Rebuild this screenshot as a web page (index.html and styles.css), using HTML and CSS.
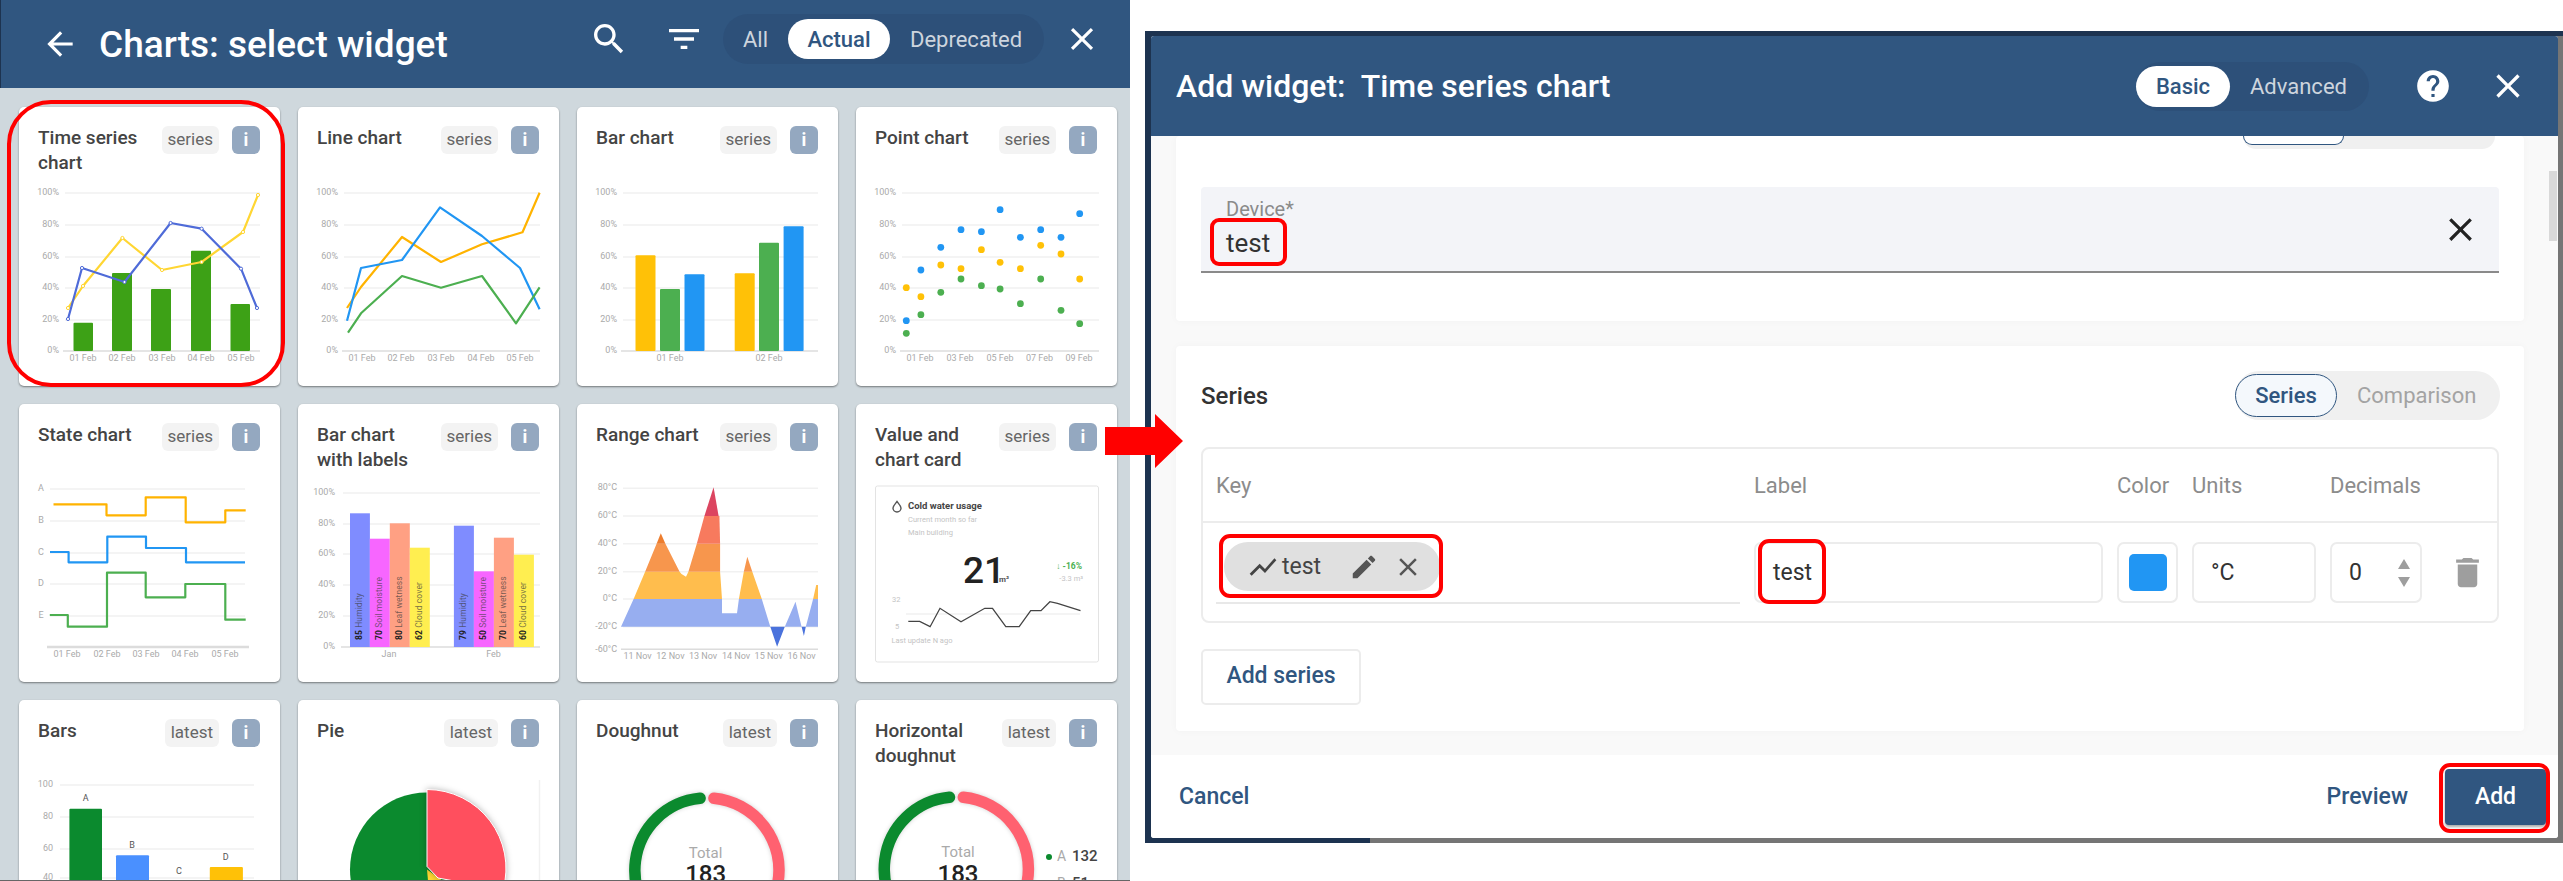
FILE: index.html
```html
<!DOCTYPE html>
<html lang="en">
<head>
<meta charset="utf-8">
<title>Charts: select widget</title>
<link rel="stylesheet" href="styles.css">
</head>
<body>
<div class="page">

<section class="picker">
  <header class="picker-head">
    <svg class="ic ic-back" viewBox="0 0 24 24"><path d="M20 11H7.83l5.59-5.59L12 4l-8 8 8 8 1.41-1.41L7.83 13H20v-2z"/></svg>
    <h1 class="picker-title">Charts: select widget</h1>
    <div class="picker-tools">
      <svg class="ic ic-40" viewBox="0 0 24 24"><path d="M15.5 14h-.79l-.28-.27C15.41 12.59 16 11.11 16 9.5 16 5.91 13.09 3 9.5 3S3 5.91 3 9.5 5.91 16 9.5 16c1.61 0 3.09-.59 4.23-1.57l.27.28v.79l5 4.99L20.49 19l-4.99-5zm-6 0C7.01 14 5 11.99 5 9.5S7.01 5 9.5 5 14 7.01 14 9.5 11.99 14 9.5 14z"/></svg>
      <svg class="ic ic-40 ic-filter" viewBox="0 0 24 24"><path d="M10 18h4v-2h-4v2zM3 6v2h18V6H3zm3 7h12v-2H6v2z"/></svg>
      <div class="seg seg-picker">
        <span class="seg-item seg-all">All</span>
        <span class="seg-item seg-on seg-actual">Actual</span>
        <span class="seg-item seg-dep">Deprecated</span>
      </div>
      <svg class="ic ic-38 ic-pclose" viewBox="0 0 24 24"><path d="M19 6.41L17.59 5 12 10.59 6.41 5 5 6.41 10.59 12 5 17.59 6.41 19 12 13.41 17.59 19 19 17.59 13.41 12 19 6.41z"/></svg>
    </div>
  </header>

  <div class="cards">

    <article class="card">
      <div class="card-head"><h2 class="card-title">Time series chart</h2><span class="tag">series</span><span class="info">i</span></div>
      <svg class="chart" viewBox="0 70 261 209">
        <path class="grid" d="M46 86H241M46 118H241M46 150H241M46 181H241M46 213H241"/><path class="axis" d="M44 244H241"/>
        <g class="yl" transform="translate(40 0)"><text y="86">100%</text><text y="118">80%</text><text y="150">60%</text><text y="181">40%</text><text y="213">20%</text><text y="244">0%</text></g>
        <g class="xl"><text x="64" y="252">01 Feb</text><text x="103" y="252">02 Feb</text><text x="143" y="252">03 Feb</text><text x="182" y="252">04 Feb</text><text x="222" y="252">05 Feb</text></g>
        <g fill="#3da116"><rect x="54.5" y="215.7" width="19.5" height="28.3" rx="1"/><rect x="93" y="166" width="20" height="78" rx="1"/><rect x="132" y="182" width="20" height="62" rx="1"/><rect x="172" y="143.7" width="20" height="100.3" rx="1"/><rect x="211.5" y="197" width="19.5" height="47" rx="1"/></g>
        <polyline class="ln" stroke="#ffd633" points="49,201 64,179 103.4,131 143,163 182.6,155 224,125 239,88"/>
        <polyline class="ln" stroke="#4f6bd8" points="49,212 63,161 105.5,175 151.6,116 182.6,121.7 222,161.7 238,201"/>
        <g fill="#fff" stroke="#ffd633"><circle cx="49" cy="201" r="1.6"/><circle cx="64" cy="179" r="1.6"/><circle cx="103.4" cy="131" r="1.6"/><circle cx="143" cy="163" r="1.6"/><circle cx="182.6" cy="155" r="1.6"/><circle cx="224" cy="125" r="1.6"/><circle cx="239" cy="88" r="1.6"/></g>
        <g fill="#fff" stroke="#4f6bd8"><circle cx="49" cy="212" r="1.6"/><circle cx="63" cy="161" r="1.6"/><circle cx="105.5" cy="175" r="1.6"/><circle cx="151.6" cy="116" r="1.6"/><circle cx="182.6" cy="121.7" r="1.6"/><circle cx="222" cy="161.7" r="1.6"/><circle cx="238" cy="201" r="1.6"/></g>
      </svg>
    </article>

    <article class="card">
      <div class="card-head"><h2 class="card-title">Line chart</h2><span class="tag">series</span><span class="info">i</span></div>
      <svg class="chart" viewBox="0 70 261 209">
        <path class="grid" d="M46 86H242M46 118H242M46 150H242M46 181H242M46 213H242"/><path class="axis" d="M44 244H242"/>
        <g class="yl" transform="translate(40 0)"><text y="86">100%</text><text y="118">80%</text><text y="150">60%</text><text y="181">40%</text><text y="213">20%</text><text y="244">0%</text></g>
        <g class="xl"><text x="64" y="252">01 Feb</text><text x="103" y="252">02 Feb</text><text x="143" y="252">03 Feb</text><text x="183" y="252">04 Feb</text><text x="222" y="252">05 Feb</text></g>
        <polyline class="ln" stroke="#ffb300" points="49,201 63,180 104,130 143,155 184,137.3 224.5,125.3 241.6,85.7"/>
        <polyline class="ln" stroke="#2196f3" points="49,213.7 63,161 104,153 142,100.3 184,129 222,161 241.6,202.3"/>
        <polyline class="ln" stroke="#4caf50" points="50,225.7 63,206.3 104,169 143,180.7 184,169 218,216.3 241.6,180.3"/>
      </svg>
    </article>

    <article class="card">
      <div class="card-head"><h2 class="card-title">Bar chart</h2><span class="tag">series</span><span class="info">i</span></div>
      <svg class="chart" viewBox="0 70 261 209">
        <path class="grid" d="M46 86H241M46 118H241M46 150H241M46 181H241M46 213H241"/><path class="axis" d="M44 244H241"/>
        <g class="yl" transform="translate(40 0)"><text y="86">100%</text><text y="118">80%</text><text y="150">60%</text><text y="181">40%</text><text y="213">20%</text><text y="244">0%</text></g>
        <g class="xl"><text x="93" y="252">01 Feb</text><text x="192" y="252">02 Feb</text></g>
        <g fill="#ffc107"><rect x="58.5" y="148.3" width="20" height="95.7" rx="1"/><rect x="157.7" y="166.3" width="20" height="77.7" rx="1"/></g>
        <g fill="#4caf50"><rect x="83" y="182" width="20" height="62" rx="1"/><rect x="182" y="135.7" width="20" height="108.3" rx="1"/></g>
        <g fill="#2196f3"><rect x="107.5" y="167.3" width="20" height="76.7" rx="1"/><rect x="206.6" y="119.3" width="20" height="124.7" rx="1"/></g>
      </svg>
    </article>

    <article class="card">
      <div class="card-head"><h2 class="card-title">Point chart</h2><span class="tag">series</span><span class="info">i</span></div>
      <svg class="chart" viewBox="0 70 261 209">
        <path class="grid" d="M46 86H243M46 118H243M46 150H243M46 181H243M46 213H243"/><path class="axis" d="M44 244H243"/>
        <g class="yl" transform="translate(40 0)"><text y="86">100%</text><text y="118">80%</text><text y="150">60%</text><text y="181">40%</text><text y="213">20%</text><text y="244">0%</text></g>
        <g class="xl"><text x="64" y="252">01 Feb</text><text x="104" y="252">03 Feb</text><text x="144" y="252">05 Feb</text><text x="183.5" y="252">07 Feb</text><text x="223" y="252">09 Feb</text></g>
        <g fill="#2196f3"><circle cx="50.3" cy="213.7" r="3.4"/><circle cx="64.9" cy="163" r="3.4"/><circle cx="84.8" cy="140.3" r="3.4"/><circle cx="105" cy="122.7" r="3.4"/><circle cx="125.4" cy="124.7" r="3.4"/><circle cx="144.1" cy="102.7" r="3.4"/><circle cx="164.4" cy="130.3" r="3.4"/><circle cx="184.7" cy="122.7" r="3.4"/><circle cx="205" cy="130.3" r="3.4"/><circle cx="223.7" cy="106.7" r="3.4"/></g>
        <g fill="#ffc107"><circle cx="50.3" cy="180.7" r="3.4"/><circle cx="64.9" cy="189.7" r="3.4"/><circle cx="84.8" cy="158" r="3.4"/><circle cx="105" cy="161.7" r="3.4"/><circle cx="125.4" cy="142.7" r="3.4"/><circle cx="144.1" cy="155.3" r="3.4"/><circle cx="164.4" cy="161.7" r="3.4"/><circle cx="184.7" cy="138.3" r="3.4"/><circle cx="205" cy="147" r="3.4"/><circle cx="223.7" cy="172" r="3.4"/></g>
        <g fill="#4caf50"><circle cx="50.3" cy="226.3" r="3.4"/><circle cx="64.9" cy="207.7" r="3.4"/><circle cx="84.8" cy="185.3" r="3.4"/><circle cx="105" cy="172" r="3.4"/><circle cx="125.4" cy="178.7" r="3.4"/><circle cx="144.1" cy="182" r="3.4"/><circle cx="164.4" cy="196.7" r="3.4"/><circle cx="184.7" cy="172" r="3.4"/><circle cx="205" cy="203.3" r="3.4"/><circle cx="223.7" cy="216.7" r="3.4"/></g>
      </svg>
    </article>

    <article class="card">
      <div class="card-head"><h2 class="card-title">State chart</h2><span class="tag">series</span><span class="info">i</span></div>
      <svg class="chart" viewBox="0 70 261 209">
        <path class="grid" d="M31 85H226M31 117H226M31 149H226M31 180H226M31 212H226"/><path class="axis axis-thick" d="M28 243H230"/>
        <g class="xl"><text x="22" y="85">A</text><text x="22" y="117">B</text><text x="22" y="149">C</text><text x="22" y="180">D</text><text x="22" y="212">E</text></g>
        <g class="xl"><text x="48" y="251">01 Feb</text><text x="88" y="251">02 Feb</text><text x="127" y="251">03 Feb</text><text x="166" y="251">04 Feb</text><text x="206" y="251">05 Feb</text></g>
        <polyline class="ln" stroke="#ffb300" points="34.5,100.3 87.5,100.3 87.5,111.3 126.7,111.3 126.7,93.3 166.7,93.3 166.7,118.3 206.3,118.3 206.3,106.3 226.7,106.3"/>
        <polyline class="ln" stroke="#2196f3" points="31,148 49.6,148 49.6,158.3 88.3,158.3 88.3,132.7 127,132.7 127,144 167,144 167,158.3 226,158.3"/>
        <polyline class="ln" stroke="#4caf50" points="30.8,211 48.8,211 48.8,222.7 88,222.7 88,168.7 126.7,168.7 126.7,193.3 166.3,193.3 166.3,180 206.3,180 206.3,215.7 226.7,215.7"/>
      </svg>
    </article>

    <article class="card">
      <div class="card-head"><h2 class="card-title">Bar chart<br>with labels</h2><span class="tag">series</span><span class="info">i</span></div>
      <svg class="chart" viewBox="0 70 261 209">
        <path class="grid" d="M45 89H242M45 120H242M45 150H242M45 181H242M45 212H242"/><path class="axis" d="M43 243H242"/>
        <g class="yl" transform="translate(37 0)"><text y="89">100%</text><text y="120">80%</text><text y="150">60%</text><text y="181">40%</text><text y="212">20%</text><text y="243">0%</text></g>
        <g class="xl"><text x="91" y="251">Jan</text><text x="195.5" y="251">Feb</text></g>
        <g fill="#7f8cff"><rect x="52" y="109.3" width="19.9" height="133.7"/><rect x="155.9" y="121.7" width="20" height="121.3"/></g>
        <g fill="#f766ff"><rect x="71.8" y="134.7" width="20" height="108.3"/><rect x="175.9" y="167.3" width="20" height="75.7"/></g>
        <g fill="#ffa083"><rect x="91.8" y="119.3" width="20" height="123.7"/><rect x="195.9" y="133.7" width="20" height="109.3"/></g>
        <g fill="#ffee50"><rect x="111.8" y="143.7" width="20" height="99.3"/><rect x="215.9" y="150.7" width="20" height="92.3"/></g>
        <g class="bl">
          <text transform="translate(62 236) rotate(-90)"><tspan class="bl-n">85</tspan> Humidity</text>
          <text transform="translate(82 236) rotate(-90)"><tspan class="bl-n">70</tspan> Soil moisture</text>
          <text transform="translate(102 236) rotate(-90)"><tspan class="bl-n">80</tspan> Leaf wetness</text>
          <text transform="translate(122 236) rotate(-90)"><tspan class="bl-n">62</tspan> Cloud cover</text>
          <text transform="translate(166 236) rotate(-90)"><tspan class="bl-n">79</tspan> Humidity</text>
          <text transform="translate(186 236) rotate(-90)"><tspan class="bl-n">50</tspan> Soil moisture</text>
          <text transform="translate(206 236) rotate(-90)"><tspan class="bl-n">70</tspan> Leaf wetness</text>
          <text transform="translate(226 236) rotate(-90)"><tspan class="bl-n">60</tspan> Cloud cover</text>
        </g>
      </svg>
    </article>

    <article class="card">
      <div class="card-head"><h2 class="card-title">Range chart</h2><span class="tag">series</span><span class="info">i</span></div>
      <svg class="chart" viewBox="0 70 261 209">
        <path class="grid" d="M46 84.3H241M46 112H241M46 139.7H241M46 167.7H241M46 195H241M46 222.7H241"/><path class="axis" d="M44 245.3H241"/>
        <g class="yl" transform="translate(40 0)"><text y="84">80°C</text><text y="112">60°C</text><text y="140">40°C</text><text y="168">20°C</text><text y="195">0°C</text><text y="223">-20°C</text><text y="246">-60°C</text></g>
        <g class="xl"><text x="60.5" y="253">11 Nov</text><text x="93.4" y="253">12 Nov</text><text x="126" y="253">13 Nov</text><text x="159" y="253">14 Nov</text><text x="191.7" y="253">15 Nov</text><text x="224.6" y="253">16 Nov</text></g>
        <polygon fill="#97aef0" points="44,222.7 56.6,195 145,195 145,209.3 160,209.3 161.9,195 184.8,195 193.3,222.7 207.8,222.7 218.5,197.7 224.6,222.7 228.8,222.7 236.1,195 241,195 241,222.7"/>
        <path fill="#4a72dc" d="M193.3 222.7L200.1 242.7L207.8 222.7ZM224.6 222.7L226.9 232L228.8 222.7Z"/>
        <path fill="#ffbd4d" d="M56.6 195L68.1 167.7H102.6L104.5 170L109 172.7L111.4 167.7H143.1L145 195ZM161.9 195L166.8 167.7H175.3L184.8 195ZM236.1 195L239.2 181H241V195Z"/>
        <path fill="#f7964d" d="M68.1 167.7L79.6 139.7H88.4L102.6 167.7ZM111.4 167.7L119.8 139.7H143.1V167.7ZM166.8 167.7L170.3 152.7L175.3 167.7Z"/>
        <path fill="#ed7d2e" d="M79.6 139.7L83.8 129.3L88.4 139.7Z"/>
        <path fill="#f77a5e" d="M119.8 139.7L127.4 112H142.4L143.1 139.7Z"/>
        <path fill="#dc4560" d="M127.4 112L136.6 83.3L141.6 112Z"/>
      </svg>
    </article>

    <article class="card">
      <div class="card-head"><h2 class="card-title">Value and<br>chart card</h2><span class="tag">series</span><span class="info">i</span></div>
      <svg class="chart" viewBox="0 70 261 209">
        <rect x="19.5" y="82" width="223" height="176" rx="2" fill="#fff" stroke="#e3e3e3"/>
        <path d="M41 97.5c2 2.6 4 4.5 4 6.5a4 4 0 0 1-8 0c0-2 2-3.9 4-6.5z" fill="none" stroke="#555" stroke-width="1.4"/>
        <text class="v-name" x="52" y="102">Cold water usage</text>
        <text class="v-sub" x="52" y="116">Current month so far</text>
        <text class="v-sub" x="52" y="129">Main building</text>
        <text class="v-num" x="107" y="169">21</text>
        <text class="v-unit" x="143" y="176">m³</text>
        <text class="v-delta" x="226" y="163">↓ -16%</text>
        <text class="v-sub v-end" x="227" y="175">-3.3 m³</text>
        <path class="grid" d="M50 210H224"/>
        <text class="v-sub" x="36" y="196">32</text><text class="v-sub" x="39" y="223">5</text>
        <polyline class="ln-thin" points="52.3,217.3 63.7,217.3 74.1,222.7 84,204.3 105,217.7 128.8,204.3 136.5,204.3 149.8,222.7 163.2,222.7 174.7,206.7 185,206.7 193.9,197.7 201.5,199.3 224.5,206.7"/>
        <text class="v-sub" x="35.4" y="237">Last update N ago</text>
      </svg>
    </article>

    <article class="card">
      <div class="card-head"><h2 class="card-title">Bars</h2><span class="tag">latest</span><span class="info">i</span></div>
      <svg class="chart" viewBox="0 70 261 209">
        <path class="grid" d="M41 85H235M41 117H235M41 149H235M41 178H235"/>
        <g class="yl" transform="translate(34 0)"><text y="85">100</text><text y="117">80</text><text y="149">60</text><text y="178">40</text></g>
        <g class="xl xl-dark"><text x="66.7" y="99">A</text><text x="113" y="146">B</text><text x="160" y="172">C</text><text x="206.7" y="158">D</text></g>
        <rect x="50.4" y="108.7" width="32.6" height="100" rx="1" fill="#0b8a2e"/>
        <rect x="97" y="155.3" width="33" height="60" rx="1" fill="#4a90ff"/>
        <rect x="190.8" y="167" width="33.1" height="60" rx="1" fill="#ffc107"/>
      </svg>
    </article>

    <article class="card">
      <div class="card-head"><h2 class="card-title">Pie</h2><span class="tag">latest</span><span class="info">i</span></div>
      <svg class="chart" viewBox="0 70 261 209">
        <path class="grid" d="M241.5 80V200"/>
        <circle cx="129" cy="169.5" r="77" fill="#0b8a2e"/>
        <path d="M129 169.5L143 179.5L137 260Z" fill="#ffd633"/>
        <path class="pie-red" d="M129 166.5V89.5A79 79 0 0 1 205 190L140 178Z" fill="#ff4f5e" stroke="#fff"/>
      </svg>
    </article>

    <article class="card">
      <div class="card-head"><h2 class="card-title">Doughnut</h2><span class="tag">latest</span><span class="info">i</span></div>
      <svg class="chart" viewBox="0 70 261 209">
        <path class="ring" stroke="#0b8a2e" d="M123.1 98.3A72 72 0 0 0 105.4 237.7"/>
        <path class="ring" stroke="#ff6170" d="M136.9 98.3A72 72 0 0 1 200.9 182.5"/>
        <text class="d-total" x="128.6" y="154">Total</text>
        <text class="d-num" x="128.6" y="176">183</text>
      </svg>
    </article>

    <article class="card">
      <div class="card-head"><h2 class="card-title">Horizontal<br>doughnut</h2><span class="tag">latest</span><span class="info">i</span></div>
      <svg class="chart" viewBox="0 70 261 209">
        <path class="ring" stroke="#0b8a2e" d="M93.5 97.3A72 72 0 0 0 75.8 236.7"/>
        <path class="ring" stroke="#ff6170" d="M107.3 97.3A72 72 0 0 1 171.3 181.5"/>
        <text class="d-total" x="102" y="153">Total</text>
        <text class="d-num" x="102" y="176">183</text>
        <circle cx="193" cy="157" r="3" fill="#0b8a2e"/><text class="d-key" x="201" y="157">A</text><text class="d-val" x="216" y="157">132</text>
        <circle cx="193" cy="184" r="3" fill="#ff6170"/><text class="d-key" x="201" y="184">B</text><text class="d-val" x="216" y="184">51</text>
      </svg>
    </article>
  </div>
</section>

<section class="frame">
  <div class="dialog">
    <header class="dlg-head">
      <h1 class="dlg-title">Add widget:&nbsp; Time series chart</h1>
      <div class="seg seg-dlg">
        <span class="seg-item seg-on seg-basic">Basic</span>
        <span class="seg-item seg-adv">Advanced</span>
      </div>
      <svg class="ic ic-help" viewBox="0 0 24 24"><path d="M12 2C6.48 2 2 6.48 2 12s4.48 10 10 10 10-4.48 10-10S17.52 2 12 2zm1 17h-2v-2h2v2zm2.07-7.75l-.9.92C13.45 12.9 13 13.5 13 15h-2v-.5c0-1.1.45-2.1 1.17-2.83l1.24-1.26c.37-.36.59-.86.59-1.41 0-1.1-.9-2-2-2s-2 .9-2 2H8c0-2.21 1.79-4 4-4s4 1.79 4 4c0 .88-.36 1.68-.93 2.25z"/></svg>
      <svg class="ic ic-dclose" viewBox="0 0 24 24"><path d="M19 6.41L17.59 5 12 10.59 6.41 5 5 6.41 10.59 12 5 17.59 6.41 19 12 13.41 17.59 19 19 17.59 13.41 12 19 6.41z"/></svg>
    </header>

    <div class="dlg-body">
      <div class="panel panel-device">
        <div class="clip-seg"><span class="clip-on"></span></div>
        <div class="field">
          <div class="field-main">
            <span class="field-label">Device*</span>
            <span class="field-value">test</span>
          </div>
          <svg class="ic ic-fclose" viewBox="0 0 24 24"><path d="M19 6.41L17.59 5 12 10.59 6.41 5 5 6.41 10.59 12 5 17.59 6.41 19 12 13.41 17.59 19 19 17.59 13.41 12 19 6.41z"/></svg>
        </div>
      </div>

      <div class="panel panel-series">
        <div class="series-head">
          <h2 class="series-title">Series</h2>
          <div class="seg seg-series">
            <span class="seg-item seg-series-on">Series</span>
            <span class="seg-item seg-comp">Comparison</span>
          </div>
        </div>
        <div class="table">
          <div class="t-row t-head">
            <span>Key</span><span>Label</span><span>Color</span><span>Units</span><span>Decimals</span><span></span>
          </div>
          <div class="t-row t-body">
            <div class="key-field">
              <div class="chip">
                <svg class="ic ic-trend" viewBox="0 0 24 24"><path d="M3.5 18.49l6-6.01 4 4L22 6.92l-1.41-1.41-7.09 7.97-4-4L2 16.99z"/></svg>
                <span class="chip-text">test</span>
                <svg class="ic ic-edit" viewBox="0 0 24 24"><path d="M3 17.25V21h3.75L17.81 9.94l-3.75-3.75L3 17.25zM20.71 7.04c.39-.39.39-1.02 0-1.41l-2.34-2.34c-.39-.39-1.02-.39-1.41 0l-1.83 1.83 3.75 3.75 1.83-1.83z"/></svg>
                <svg class="ic ic-cclose" viewBox="0 0 24 24"><path d="M19 6.41L17.59 5 12 10.59 6.41 5 5 6.41 10.59 12 5 17.59 6.41 19 12 13.41 17.59 19 19 17.59 13.41 12 19 6.41z"/></svg>
              </div>
            </div>
            <div class="box box-text">test</div>
            <div class="box box-color"><span class="swatch"></span></div>
            <div class="box box-text">°C</div>
            <div class="box box-text box-num">0
              <svg class="spin" viewBox="0 0 14 28"><path d="M7 0L13 10H1ZM7 28L1 18H13Z"/></svg>
            </div>
            <svg class="ic ic-trash" viewBox="0 0 24 24"><path d="M6 19c0 1.1.9 2 2 2h8c1.1 0 2-.9 2-2V7H6v12zM19 4h-3.5l-1-1h-5l-1 1H5v2h14V4z"/></svg>
          </div>
        </div>
        <button class="btn-outline">Add series</button>
      </div>
      <div class="scroll-thumb"></div>
    </div>

    <footer class="dlg-foot">
      <span class="link link-cancel">Cancel</span>
      <span class="link link-preview">Preview</span>
      <button class="btn-primary">Add</button>
    </footer>
  </div>
</section>

<div class="mark mark-card"></div>
<div class="mark mark-device"></div>
<div class="mark mark-chip"></div>
<div class="mark mark-label"></div>
<div class="mark mark-add"></div>
<svg class="flow-arrow" viewBox="0 0 78 54"><polygon points="0,13 50,13 50,0 78,27 50,54 50,41 0,41"/></svg>

</div>
</body>
</html>
```
FILE: styles.css
```css
* { box-sizing: border-box; }
html, body { margin: 0; padding: 0; background: #fff; }
body { font-family: Roboto, "Liberation Sans", sans-serif; overflow: hidden; }
h1, h2 { margin: 0; font-weight: 500; }
.page { position: relative; width: 2563px; height: 881px; display: flex; align-items: flex-start; overflow: hidden; }
.ic { display: block; flex: none; fill: currentColor; }

/* left: widget picker */
.picker { width: 1130px; height: 881px; flex: none; background: #cfd8dd; border-bottom: 1px solid #666; overflow: hidden; }
.picker-head { height: 88px; background: #305680; color: #fff; display: flex; align-items: center; padding-left: 40px; border-left: 1px solid #1d3350; }
.ic-back { width: 38px; height: 38px; margin-right: 20px; }
.picker-title { font-size: 37px; font-weight: 500; color: #fff; }
.picker-tools { margin-left: auto; display: flex; align-items: center; padding-bottom: 10px; height: 88px; }
.ic-40 { width: 40px; height: 40px; }
.ic-filter { margin-left: 35px; margin-right: 19px; }
.ic-38 { width: 38px; height: 38px; }
.ic-pclose { margin-left: 19px; margin-right: 29px; }

.seg { display: flex; align-items: center; border-radius: 30px; }
.seg-item { font-size: 22px; white-space: nowrap; }
.seg-picker { width: 321px; height: 50px; background: #2d5079; }
.seg-all { color: #cdd5de; margin-left: 20px; width: 45px; }
.seg-on { background: #fff; color: #305680; font-weight: 500; border-radius: 22px; display: flex; align-items: center; justify-content: center; }
.seg-actual { width: 102px; height: 40px; }
.seg-dep { color: #cdd5de; margin-left: 20px; }

.cards { display: grid; grid-template-columns: repeat(4, 261px); grid-auto-rows: 278.5px; gap: 18px; padding: 19px 0 0 19px; }
.card { background: #fff; border-radius: 5px; box-shadow: 0 1px 2px rgba(0,0,0,.45); overflow: hidden; }
.card-head { height: 70px; display: flex; align-items: flex-start; padding: 19px 20px 0 19px; }
.card-title { flex: 1; font-size: 19px; line-height: 25px; color: #444; font-weight: 500; margin-top: -1px; }
.tag { height: 28px; padding: 0 6px; background: #f3f3f3; border-radius: 6px; color: #666; font-size: 17px; line-height: 27px; }
.info { width: 28px; height: 28px; margin-left: 13px; background: #94a8c0; border-radius: 6px; color: #fff; font-size: 18px; font-weight: 700; text-align: center; line-height: 27px; }
.chart { display: block; width: 261px; height: 209px; font-family: Roboto, sans-serif; overflow: hidden; }
.chart text { dominant-baseline: middle; }
.grid { stroke: #f1f1f1; stroke-width: 1.5; fill: none; }
.axis { stroke: #dcdcdc; stroke-width: 1.5; fill: none; }
.axis-thick { stroke-width: 2.5; }
.yl text { font-size: 9px; fill: #aaa; text-anchor: end; }
.xl text { font-size: 9px; fill: #aaa; text-anchor: middle; }
.xl-dark text { fill: #555; }
.ln { fill: none; stroke-width: 2.2; stroke-linejoin: round; }
.ln-thin { fill: none; stroke: #444; stroke-width: 1.3; }
.bl text { font-size: 8.5px; fill: rgba(60,60,60,.7); letter-spacing: .1px; }
.bl-n { font-weight: 700; fill: #222; }
.v-name { font-size: 9.5px; font-weight: 700; fill: #444; }
.v-sub { font-size: 7.5px; fill: #c4c4c4; }
.v-end { text-anchor: end; }
.v-num { font-size: 37px; font-weight: 500; fill: #222; }
.v-unit { font-size: 8px; font-weight: 700; fill: #555; }
.v-delta { font-size: 8.5px; font-weight: 700; fill: #4caf50; text-anchor: end; }
.ring { fill: none; stroke-width: 11.5; stroke-linecap: round; filter: drop-shadow(0 0 2px rgba(0,0,0,.18)); }
.pie-red { stroke-width: 1; filter: drop-shadow(0 0 3px rgba(0,0,0,.3)); }
.d-total { font-size: 15px; fill: #aaa; text-anchor: middle; }
.d-num { font-size: 24px; font-weight: 500; fill: #222; text-anchor: middle; }
.d-key { font-size: 14px; fill: #aaa; }
.d-val { font-size: 15px; font-weight: 500; fill: #444; }

/* right: add-widget dialog */
.frame {
  margin-left: 15px; margin-top: 31px; width: 1418px; height: 812px; flex: none; padding: 5px 5px 5px 6px;
  background:
    linear-gradient(#1d3350, #1d3350) left top / 225px 100% no-repeat,
    linear-gradient(#1d3350, #1d3350) left top / 100% 5px no-repeat,
    #757575;
}
.dialog { height: 802px; background: #fff; border-radius: 3px; display: flex; flex-direction: column; overflow: hidden; }
.dlg-head { height: 100px; flex: none; background: #305680; color: #fff; display: flex; align-items: center; padding-left: 25px; }
.dlg-title { font-size: 32px; font-weight: 500; color: #fff; margin-right: auto; }
.seg-dlg { width: 233px; height: 49px; background: #2d5079; }
.seg-basic { width: 94px; height: 41px; }
.seg-adv { color: #cdd5de; margin-left: 20px; }
.ic-help { width: 38px; height: 38px; margin-left: 45px; }
.ic-dclose { width: 40px; height: 40px; margin-left: 36px; margin-right: 30px; }

.dlg-body { position: relative; height: 619px; flex: none; background: #f9f9f9; padding: 0 34px 0 25px; overflow: hidden; }
.panel { background: #fff; border-radius: 4px; padding: 0 25px; box-shadow: 0 0 8px rgba(0,0,0,.03); }
.panel-device { height: 185px; margin-bottom: 25px; }
.clip-seg { width: 252px; height: 13px; margin-left: auto; margin-bottom: 38px; margin-right: 4px; background: #f0f0f0; border-radius: 0 0 22px 22px; }
.clip-on { display: block; width: 101px; height: 9px; background: #fff; border: 1px solid #305680; border-top: 0; border-radius: 0 0 20px 20px; }
.field { height: 86px; background: #f3f4f8; border-bottom: 2px solid #8a8a8a; border-radius: 4px 4px 0 0; display: flex; align-items: center; padding: 0 19px 0 25px; justify-content: space-between; }
.field-main { display: flex; flex-direction: column; }
.field-label { font-size: 20px; line-height: 24px; color: #8a8a8a; margin-top: -3px; }
.field-value { font-size: 26px; line-height: 30px; color: #333; margin-top: 7px; }
.ic-fclose { width: 39px; height: 39px; color: #222; }

.panel-series { height: 385px; padding-top: 25px; }
.series-head { height: 49px; display: flex; align-items: center; justify-content: space-between; }
.series-title { font-size: 24px; font-weight: 500; color: #333; }
.seg-series { width: 265px; height: 49px; background: #f0f0f0; margin-right: -1px; }
.seg-series-on { width: 102px; height: 43px; background: #f4f8fc; border: 1px solid #305680; border-radius: 22px; color: #305680; font-weight: 500; display: flex; align-items: center; justify-content: center; }
.seg-comp { color: #a3a3a3; margin-left: 20px; }

.table { margin-top: 27px; height: 176px; border: 2px solid #ececec; border-radius: 8px; }
.t-row { display: grid; grid-template-columns: 524px 349px 61px 124px 92px 1fr; column-gap: 14px; padding-left: 13px; }
.t-head { height: 74px; align-items: center; border-bottom: 2px solid #ececec; font-size: 22px; color: #8c8c8c; }
.t-body { padding-top: 19px; align-items: flex-start; }
.key-field { height: 62px; border-bottom: 2px solid #e8e8e8; padding-left: 8px; }
.chip { width: 216px; height: 49px; background: #e0e0e0; border-radius: 24px; display: flex; align-items: center; color: #444; padding-left: 24px; }
.ic-trend { width: 32px; height: 32px; color: #444; margin-left: -1px; }
.chip-text { font-size: 23px; margin-left: 3px; width: 67px; }
.ic-edit { width: 30px; height: 30px; color: #555; }
.ic-cclose { width: 30px; height: 30px; color: #555; margin-left: 14px; }
.box { height: 61px; border: 2px solid #ececec; border-radius: 7px; display: flex; align-items: center; font-size: 23px; color: #333; }
.box-text { padding-left: 17px; }
.box-color { justify-content: center; }
.swatch { width: 38px; height: 37px; background: #2196f3; border-radius: 5px; }
.box-num { justify-content: space-between; padding-right: 9px; }
.spin { width: 14px; height: 28px; fill: #9e9e9e; }
.ic-trash { width: 39px; height: 39px; color: #9e9e9e; margin: 11px 0 0 12px; }

.btn-outline { display: block; margin-top: 26px; width: 160px; height: 56px; background: #fff; border: 2px solid #ececec; border-radius: 5px; color: #305680; font: 500 23px Roboto, sans-serif; padding: 0 0 4px; }
.scroll-thumb { position: absolute; right: 1px; top: 35px; width: 8px; height: 70px; background: #d9d9d9; }

.dlg-foot { flex: 1; background: #fff; display: flex; align-items: center; padding: 0 12px 0 28px; font-size: 23px; font-weight: 500; color: #305680; }
.link-cancel { margin-right: auto; }
.link-preview { margin-right: 37px; }
.btn-primary { width: 101px; height: 56px; background: #305680; color: #fff; border: 0; border-radius: 4px; box-shadow: 0 2px 3px rgba(0,0,0,.35); font: 500 23px Roboto, sans-serif; }

/* red call-outs drawn over the screenshot */
.mark { position: absolute; border: 4px solid #f00; pointer-events: none; }
.mark-card { left: 7px; top: 100px; width: 278px; height: 287px; border-radius: 44px; }
.mark-device { left: 1210px; top: 218px; width: 77px; height: 48px; border-radius: 9px; }
.mark-chip { left: 1219px; top: 534px; width: 224px; height: 64px; border-radius: 11px; }
.mark-label { left: 1758px; top: 539px; width: 68px; height: 65px; border-radius: 11px; }
.mark-add { left: 2439px; top: 763px; width: 111px; height: 70px; border-radius: 11px; }
.flow-arrow { position: absolute; left: 1105px; top: 414px; width: 78px; height: 54px; fill: #f00; }
```
